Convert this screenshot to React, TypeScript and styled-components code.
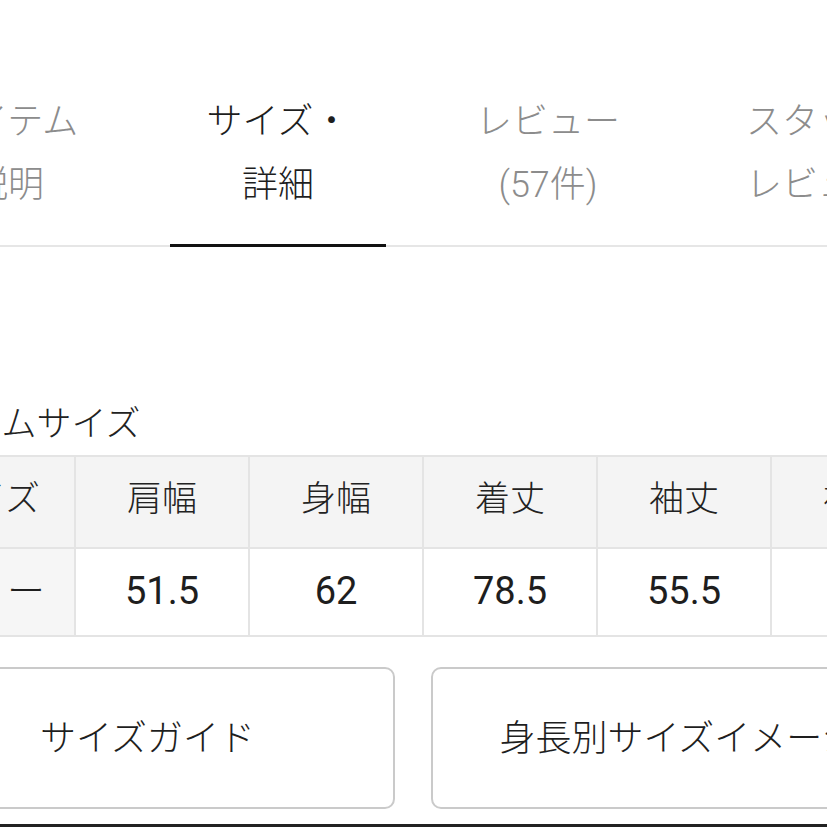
import styled, { createGlobalStyle } from "styled-components";

const GlobalStyle = createGlobalStyle`
  html, body {
    margin: 0;
    padding: 0;
    background: #ffffff;
    overflow: hidden;
  }
  body {
    font-family: Roboto, "Noto Sans CJK JP", sans-serif;
    color: #222222;
  }
`;

const tabs = [
  { lines: ["アイテム", "説明"], active: false },
  { lines: ["サイズ・", "詳細"], active: true },
  { lines: ["レビュー", "(57件)"], active: false },
  { lines: ["スタッフ", "レビュー"], active: false },
];

const headers = ["サイズ", "肩幅", "身幅", "着丈", "袖丈", "裄丈", "総丈"];
const values = ["フリー", "51.5", "62", "78.5", "55.5", "83", "80"];

export default function App() {
  return (
    <Root>
      <GlobalStyle />
      <Page>
        <TabBar>
          {tabs.map((t) => (
            <Tab key={t.lines[0]} $active={t.active}>
              <TabLabel $active={t.active}>
                {t.lines.map((l) => (
                  <span key={l}>{l}</span>
                ))}
              </TabLabel>
            </Tab>
          ))}
        </TabBar>
        <Content>
          <Heading>アイテムサイズ</Heading>
          <TableWrap>
            <SizeTable>
              <colgroup>
                {headers.map((h) => (
                  <col key={h} />
                ))}
              </colgroup>
              <thead>
                <tr>
                  {headers.map((h, i) => (
                    <HeadCell key={h} $first={i === 0}>
                      {h}
                    </HeadCell>
                  ))}
                </tr>
              </thead>
              <tbody>
                <tr>
                  {values.map((v, i) => (
                    <BodyCell key={i} $first={i === 0}>
                      {v}
                    </BodyCell>
                  ))}
                </tr>
              </tbody>
            </SizeTable>
          </TableWrap>
          <ButtonRow>
            <GuideButton>サイズガイド</GuideButton>
            <GuideButton>身長別サイズイメージ</GuideButton>
          </ButtonRow>
        </Content>
      </Page>
      <BottomBar />
    </Root>
  );
}

const Root = styled.div`
  width: 827px;
  height: 827px;
  overflow: hidden;
  display: flex;
  flex-direction: column;
`;

const Page = styled.div`
  width: 1080px;
  margin-left: -127px;
  flex: 1;
  display: flex;
  flex-direction: column;
`;

const TabBar = styled.div`
  display: flex;
  height: 247px;
  box-sizing: border-box;
  box-shadow: inset 0 -2px 0 #e6e6e6;
`;

const Tab = styled.div<{ $active: boolean }>`
  width: 270px;
  padding: 0 27px;
  box-sizing: border-box;
  display: flex;
  align-items: flex-end;
  font-size: 36px;
  font-weight: 300;
  color: ${(p) => (p.$active ? "#1e1e1e" : "#8c8c8c")};
`;

const TabLabel = styled.div<{ $active: boolean }>`
  width: 100%;
  display: flex;
  flex-direction: column;
  align-items: center;
  line-height: 63px;
  padding-bottom: 27px;
  border-bottom: 3px solid ${(p) => (p.$active ? "#111111" : "transparent")};
`;

const Content = styled.div`
  padding: 158px 27px 0;
  display: flex;
  flex-direction: column;
`;

const Heading = styled.h2`
  margin: 0 0 10px;
  font-size: 35px;
  font-weight: 300;
  line-height: 40px;
  color: #222222;
`;

const TableWrap = styled.div`
  width: 100%;
  overflow: hidden;
`;

const SizeTable = styled.table`
  border-collapse: collapse;
  table-layout: fixed;
  width: 1218px;

  col {
    width: 174px;
  }
`;

const HeadCell = styled.th<{ $first: boolean }>`
  height: 92px;
  padding: 0 0 5px;
  box-sizing: border-box;
  border: 2px solid #e4e4e4;
  background: #f4f4f4;
  font-size: 35px;
  font-weight: 300;
  line-height: 40px;
  color: #222222;
  text-align: center;
`;

const BodyCell = styled.td<{ $first: boolean }>`
  height: 88px;
  padding: 0 0 2px;
  box-sizing: border-box;
  border: 2px solid #e4e4e4;
  background: ${(p) => (p.$first ? "#f6f6f6" : "#ffffff")};
  font-size: 38px;
  font-weight: ${(p) => (p.$first ? 300 : 400)};
  line-height: 40px;
  color: #1e1e1e;
  text-align: center;
`;

const ButtonRow = styled.div`
  display: grid;
  grid-template-columns: 1fr 1fr;
  gap: 36px;
  margin-top: 30px;
`;

const GuideButton = styled.button`
  height: 142px;
  padding: 0 0 6px;
  border: 2px solid #cacaca;
  border-radius: 10px;
  background: #ffffff;
  font-family: Roboto, "Noto Sans CJK JP", sans-serif;
  font-size: 36px;
  font-weight: 300;
  color: #1e1e1e;
  white-space: nowrap;
`;

const BottomBar = styled.div`
  height: 3px;
  background: #222222;
`;
